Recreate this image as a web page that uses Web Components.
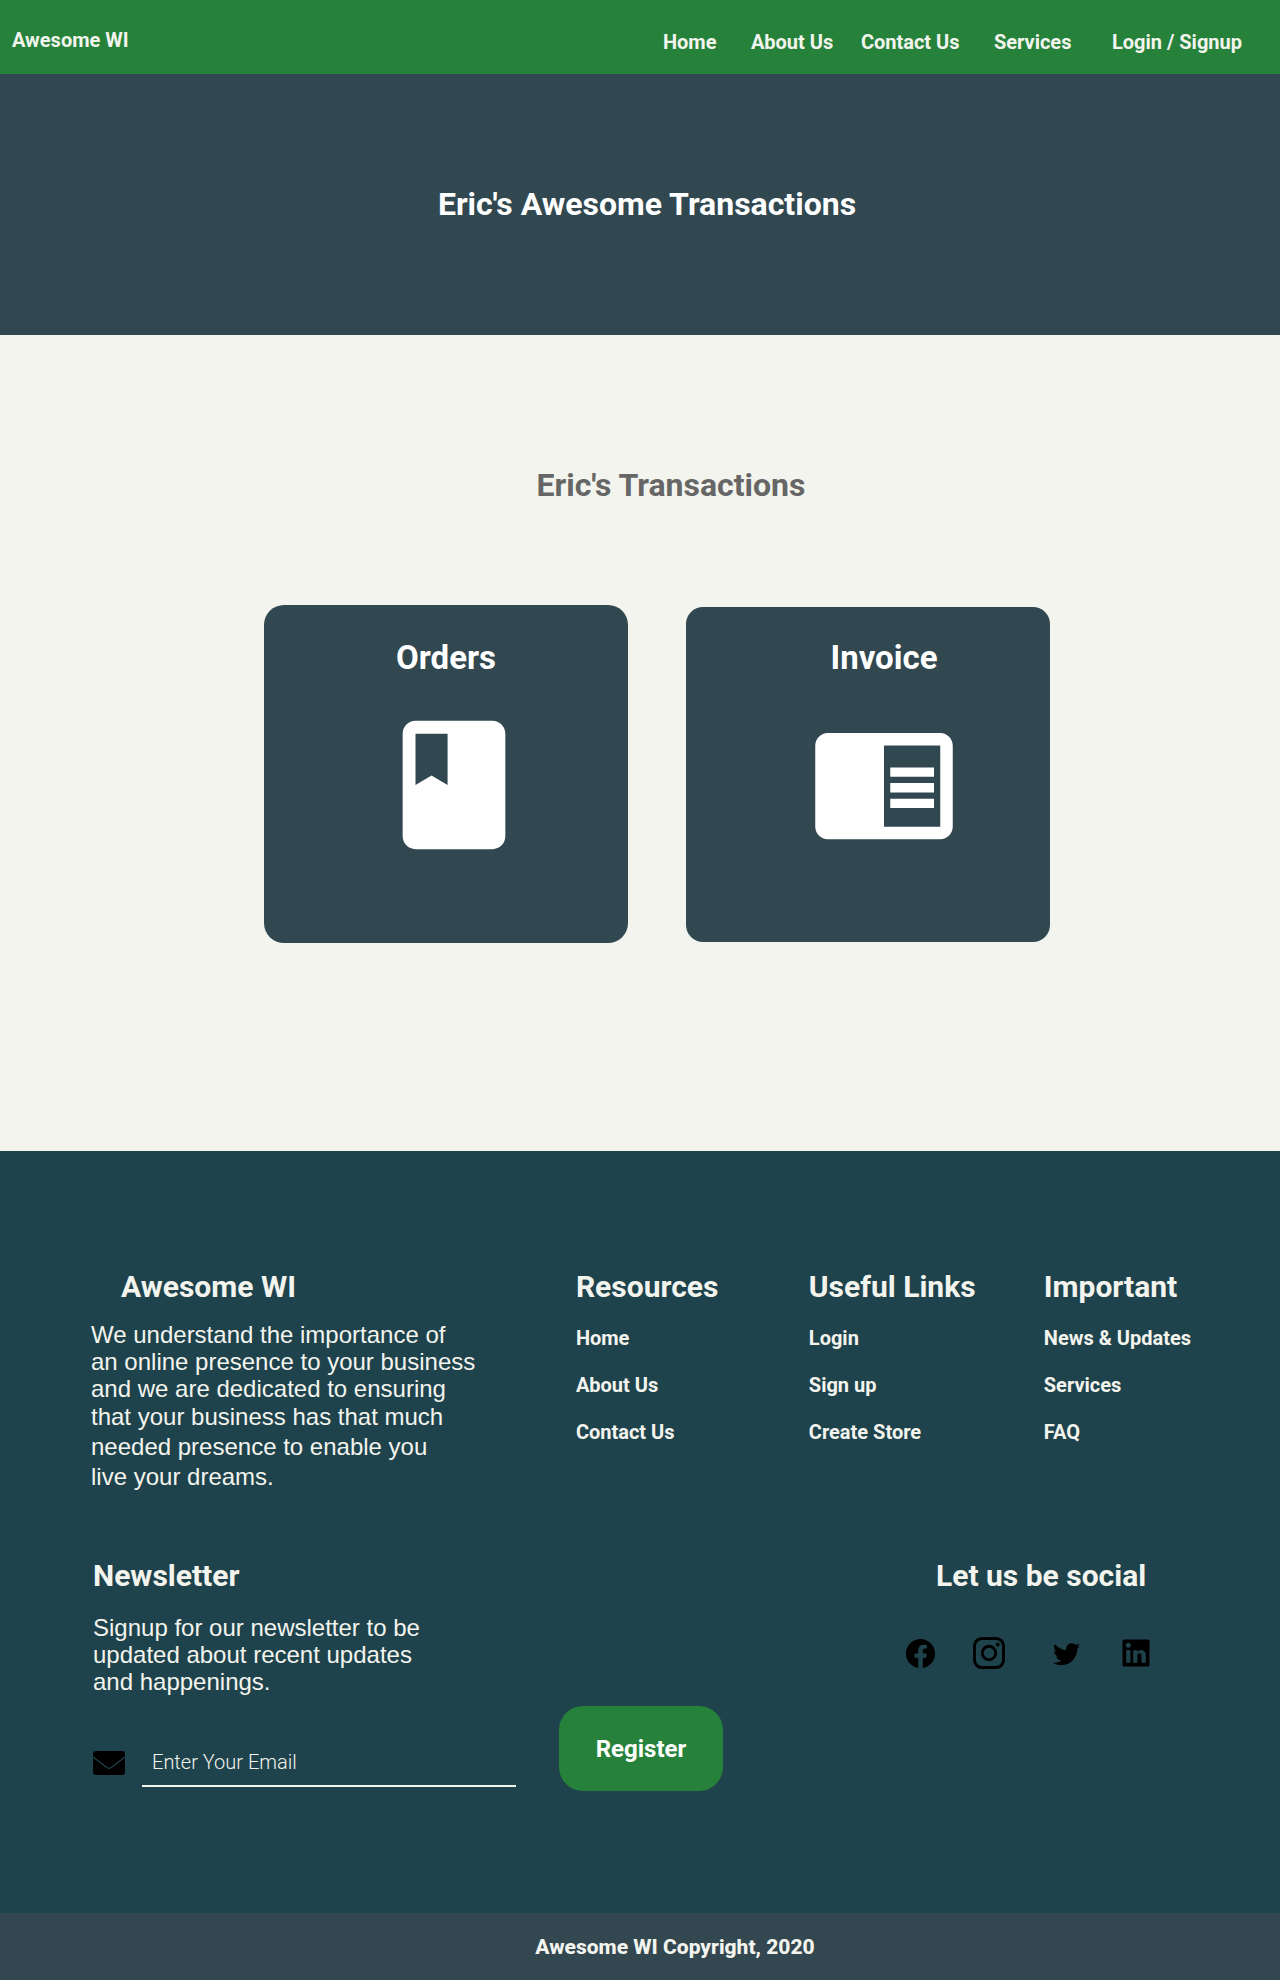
<!DOCTYPE html>
<html lang="en">
<head>
<meta charset="utf-8">
<meta name="viewport" content="width=device-width, initial-scale=1">
<title>Eric's Awesome Transactions</title>
<style>
  :root {
    --green: #26823a;
    --slate: #314850;
    --teal: #1f434c;
    --cream: #f3f4ee;
  }
  body { margin: 0; background: var(--cream); color: var(--cream); font-family: Roboto, "Liberation Sans", sans-serif; }
</style>
</head>
<body>
<wi-header></wi-header>
<wi-hero>Eric's Awesome Transactions</wi-hero>
<wi-section>
  <span slot="title">Eric's Transactions</span>
  <wi-card class="orders" href="#orders">
    <span slot="title">Orders</span>
    <wi-icon slot="icon" name="book" size="154"></wi-icon>
  </wi-card>
  <wi-card class="invoice" href="#invoice">
    <span slot="title">Invoice</span>
    <wi-icon slot="icon" name="reader" size="150"></wi-icon>
  </wi-card>
</wi-section>
<wi-footer></wi-footer>
<wi-copyright>Awesome WI Copyright, 2020</wi-copyright>

<script>
const ICONS = {
  book: ['0 0 24 24', '<path d="M18 2H6c-1.1 0-2 .9-2 2v16c0 1.1.9 2 2 2h12c1.1 0 2-.9 2-2V4c0-1.1-.9-2-2-2zM6 4h5v8l-2.500-1.500L6 12V4z"/>'],
  reader: ['0 0 24 24', '<path d="M13 12h7v1.500h-7zm0-2.500h7V11h-7zm0 5h7V16h-7zM21 4H3c-1.100 0-2 .9-2 2v13c0 1.100.9 2 2 2h18c1.100 0 2-.9 2-2V6c0-1.100-.9-2-2-2zm0 15h-9V6h9v13z"/>'],
  mail: ['0 0 32 32', '<rect y="4" width="32" height="24" rx="3"/><path d="M0 10L13.500 20.300Q16 22.300 18.500 20.300L32 10" fill="none" stroke="#1f434c" stroke-width="1.200"/>'],
  facebook: ['0 0 24 24', '<path d="M12 2.040C6.500 2.040 2 6.530 2 12.060C2 17.060 5.660 21.210 10.440 21.960V14.960H7.900V12.060H10.440V9.850C10.440 7.340 11.930 5.960 14.220 5.960C15.310 5.960 16.450 6.150 16.450 6.150V8.620H15.190C13.950 8.620 13.560 9.390 13.560 10.180V12.060H16.340L15.890 14.960H13.560V21.960A10 10 0 0 0 22 12.060C22 6.530 17.500 2.040 12 2.040Z"/>'],
  instagram: ['0 0 32 32', '<g fill="none" stroke="currentColor" stroke-width="2.900"><rect x="1.450" y="1.450" width="29.100" height="29.100" rx="7.500"/><circle cx="16" cy="16" r="6.700"/></g><circle cx="24.700" cy="7.500" r="1.900"/>'],
  twitter: ['0 0 24 24', '<path d="M22.460 6C21.690 6.350 20.860 6.580 20 6.690C20.880 6.160 21.560 5.320 21.880 4.310C21.050 4.810 20.130 5.160 19.160 5.360C18.370 4.500 17.260 4 16 4C13.650 4 11.730 5.920 11.730 8.290C11.730 8.630 11.770 8.960 11.840 9.270C8.280 9.090 5.110 7.380 3 4.790C2.630 5.420 2.420 6.160 2.420 6.940C2.420 8.430 3.170 9.750 4.330 10.500C3.620 10.500 2.960 10.300 2.380 10V10.030C2.380 12.110 3.860 13.850 5.820 14.240C5.190 14.410 4.530 14.440 3.900 14.310C4.450 16.040 6.050 17.300 7.940 17.330C6.440 18.500 4.560 19.210 2.500 19.210C2.150 19.210 1.810 19.190 1.460 19.150C3.330 20.350 5.560 21.040 7.940 21.040C16 21.040 20.330 14.460 20.330 8.790C20.330 8.600 20.330 8.420 20.320 8.230C21.160 7.630 21.880 6.870 22.460 6Z"/>'],
  linkedin: ['0 0 24 24', '<path d="M20 3A1 1 0 0 1 21 4V20A1 1 0 0 1 20 21H4A1 1 0 0 1 3 20V4A1 1 0 0 1 4 3H20M18.500 18.500V13.200A3.260 3.260 0 0 0 15.240 9.940C14.390 9.940 13.400 10.460 12.920 11.240V10.130H10.130V18.500H12.920V13.570C12.920 12.800 13.540 12.170 14.310 12.170A1.400 1.400 0 0 1 15.710 13.570V18.500H18.500M6.880 8.560A1.680 1.680 0 0 0 8.560 6.880C8.560 5.950 7.810 5.190 6.880 5.190A1.690 1.690 0 0 0 5.190 6.880C5.190 7.810 5.950 8.560 6.880 8.560M8.270 18.500V10.130H5.500V18.500H8.270Z"/>']
};

class WiElement extends HTMLElement {
  connectedCallback() {
    if (!this.shadowRoot) this.attachShadow({ mode: 'open' }).innerHTML = this.template();
  }
}

customElements.define('wi-icon', class extends WiElement {
  template() {
    const [box, art] = ICONS[this.getAttribute('name')];
    const size = this.getAttribute('size');
    return `<style>:host { display: inline-flex; } svg { display: block; fill: currentColor; }</style>
      <svg viewBox="${box}" width="${size}" height="${size}" aria-hidden="true">${art}</svg>`;
  }
});

customElements.define('wi-header', class extends WiElement {
  template() {
    return `<style>
      :host { display: block; background: var(--green); }
      header { display: flex; justify-content: space-between; align-items: center; box-sizing: border-box; min-height: 74px; padding: 6px 38px 0 12px; font-size: 20px; font-weight: 700; line-height: 24px; }
      nav { display: grid; grid-template-columns: 88px 110px 133px 118px auto; padding-top: 4px; }
      a { color: inherit; text-decoration: none; white-space: nowrap; }
    </style>
    <header><a href="#home">Awesome WI</a>
      <nav aria-label="Main"><a href="#home">Home</a><a href="#about">About Us</a><a href="#contact">Contact Us</a><a href="#services">Services</a><a href="#login">Login / Signup</a></nav>
    </header>`;
  }
});

customElements.define('wi-hero', class extends WiElement {
  template() {
    return `<style>
      :host { display: block; background: var(--slate); color: #fff; }
      h1 { margin: 0; padding: 110px 0 111px 14px; font-size: 32px; line-height: 40px; text-align: center; }
    </style><h1><slot></slot></h1>`;
  }
});

customElements.define('wi-section', class extends WiElement {
  template() {
    return `<style>
      :host { display: block; padding: 130px 0 208px 34px; }
      h2 { margin: 0 0 100px; padding-left: 28px; color: #666; font-size: 32px; line-height: 40px; text-align: center; }
      .cards { display: flex; flex-wrap: wrap; justify-content: center; align-items: center; gap: 58px; }
    </style><h2><slot name="title"></slot></h2><div class="cards"><slot></slot></div>`;
  }
});

customElements.define('wi-card', class extends WiElement {
  template() {
    return `<style>
      :host { display: block; flex: 0 1 364px; color: #fff; }
      a { display: flex; flex-direction: column; align-items: center; box-sizing: border-box; color: inherit; text-decoration: none; background: var(--slate); }
      :host(.orders) a { height: 338px; padding-top: 33px; border-radius: 20px; }
      :host(.invoice) a { height: 335px; padding: 31px 0 0 32px; border-radius: 17px; }
      h3 { margin: 0 0 30px; font-size: 33px; line-height: 40px; }
      :host(.orders) ::slotted(wi-icon) { padding-left: 16px; }
    </style><a href="${this.getAttribute('href')}"><h3><slot name="title"></slot></h3><slot name="icon"></slot></a>`;
  }
});

customElements.define('wi-link-list', class extends WiElement {
  template() {
    return `<style>
      :host { display: block; }
      h2 { margin: 0 0 21px; font-size: 30px; line-height: 36px; white-space: nowrap; }
      nav { display: flex; flex-direction: column; gap: 23px; font-size: 20px; font-weight: 700; line-height: 24px; white-space: nowrap; }
      ::slotted(a) { color: inherit; text-decoration: none; }
    </style><h2>${this.getAttribute('heading')}</h2><nav aria-label="${this.getAttribute('heading')}"><slot></slot></nav>`;
  }
});

customElements.define('wi-newsletter', class extends WiElement {
  template() {
    return `<style>
      :host { display: block; }
      h2 { margin: 0 0 20px; font-size: 30px; line-height: 36px; }
      p { margin: 0 0 11px; max-width: 340px; font: 24px/27px "Liberation Sans", sans-serif; }
      form { display: flex; align-items: flex-end; }
      label { display: flex; padding-bottom: 12px; color: #000; }
      input { box-sizing: border-box; width: 374px; height: 50px; margin: 0 43px 4px 17px; padding: 2px 10px 0; border: 0; border-bottom: 2px solid var(--cream); border-radius: 0; background: none; color: var(--cream); font: 300 20px/24px Roboto, sans-serif; }
      input::placeholder { color: var(--cream); opacity: 1; }
      button { width: 164px; height: 85px; padding: 0; border: 0; border-radius: 24px; background: var(--green); color: #fff; font: 700 24px/28px Roboto, sans-serif; }
    </style>
    <h2>Newsletter</h2>
    <p>Signup for our newsletter to be updated about recent updates and happenings.</p>
    <form><label for="email" aria-label="Email"><wi-icon name="mail" size="32"></wi-icon></label>
      <input id="email" type="email" placeholder="Enter Your Email"><button type="button">Register</button></form>`;
  }
});

customElements.define('wi-social', class extends WiElement {
  template() {
    return `<style>
      :host { display: block; }
      h2 { margin: 0 0 41px; padding-left: 34px; font-size: 30px; line-height: 36px; white-space: nowrap; }
      nav { display: grid; grid-template-columns: 69px 77px 70px 36px; }
      a { display: flex; align-items: center; justify-content: center; width: 36px; height: 36px; color: #000; }
    </style>
    <h2>Let us be social</h2>
    <nav aria-label="Social">
      <a href="#facebook" aria-label="Facebook"><wi-icon name="facebook" size="35"></wi-icon></a>
      <a href="#instagram" aria-label="Instagram"><wi-icon name="instagram" size="32"></wi-icon></a>
      <a href="#twitter" aria-label="Twitter"><wi-icon name="twitter" size="31"></wi-icon></a>
      <a href="#linkedin" aria-label="LinkedIn"><wi-icon name="linkedin" size="36"></wi-icon></a>
    </nav>`;
  }
});

customElements.define('wi-footer', class extends WiElement {
  template() {
    return `<style>
      :host { display: block; background: var(--teal); }
      footer { padding: 118px 89px 122px 91px; }
      .top { display: grid; grid-template-columns: 485fr 233fr 235fr 147fr; margin-bottom: 66px; }
      .bottom { display: flex; justify-content: space-between; align-items: flex-start; padding: 0 37px 0 2px; }
      h2 { margin: 0 0 16px; padding-left: 30px; font-size: 30px; line-height: 36px; }
      p { margin: 0; font: 24px/27px "Liberation Sans", sans-serif; }
      .more { line-height: 30px; }
    </style>
    <footer>
      <div class="top">
        <section><h2>Awesome WI</h2>
          <p>We understand the importance of<br>an online presence to your business<br>and we are dedicated to ensuring</p>
          <p class="more">that your business has that much<br>needed presence to enable you<br>live your dreams.</p>
        </section>
        <wi-link-list heading="Resources"><a href="#home">Home</a><a href="#about">About Us</a><a href="#contact">Contact Us</a></wi-link-list>
        <wi-link-list heading="Useful Links"><a href="#login">Login</a><a href="#signup">Sign up</a><a href="#store">Create Store</a></wi-link-list>
        <wi-link-list heading="Important"><a href="#news">News &amp; Updates</a><a href="#services">Services</a><a href="#faq">FAQ</a></wi-link-list>
      </div>
      <div class="bottom"><wi-newsletter></wi-newsletter><wi-social></wi-social></div>
    </footer>`;
  }
});

customElements.define('wi-copyright', class extends WiElement {
  template() {
    return `<style>
      :host { display: block; background: #32474f; }
      p { margin: 0; padding: 22px 0 21px 70px; font-size: 21px; font-weight: 800; line-height: 24px; text-align: center; }
    </style><p><slot></slot></p>`;
  }
});
</script>
</body>
</html>
